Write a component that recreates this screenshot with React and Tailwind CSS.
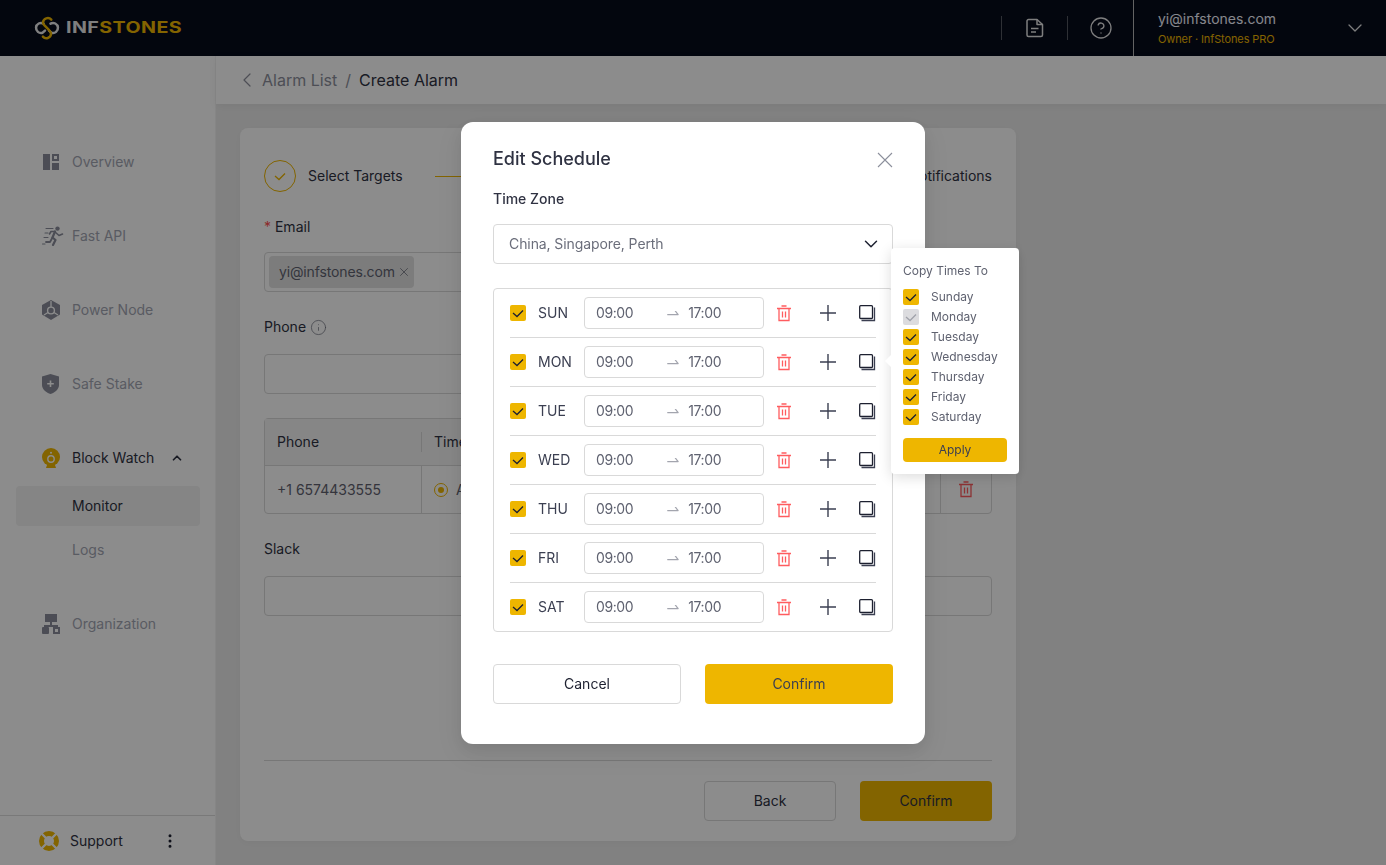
import React from "react";
import { ChevronDown, ChevronLeft, ChevronUp, CircleHelp, Info, X, EllipsisVertical } from "lucide-react";

const days = ["SUN", "MON", "TUE", "WED", "THU", "FRI", "SAT"];
const copyDays = ["Sunday", "Monday", "Tuesday", "Wednesday", "Thursday", "Friday", "Saturday"];

const Logo = () => (
	<svg width="26" height="26" viewBox="0 0 26 26" fill="none" strokeWidth="2.500" strokeLinecap="round">
		<path d="M9.500 8.600A5 5 0 1 0 8.600 17.700L11 15.600" stroke="#e8e8e8" />
		<path d="M16.500 8.600A5 5 0 1 1 17.400 17.700L15 15.600" stroke="#e8e8e8" />
		<path d="M17.300 4.600A4.800 4.800 0 0 0 9 7.400C9 11 17 14.600 17 19A4.600 4.600 0 0 1 8.900 21.600" stroke="#eeb600" />
	</svg>
);

const OverviewIcon = () => (
	<svg width="16" height="16" viewBox="0 0 16 16" fill="#8a8d9b" className="ml-px">
		<rect x="0" y="0" width="7" height="16" />
		<rect x="10" y="1" width="5" height="5" fill="none" stroke="#8a8d9b" strokeWidth="2" />
		<rect x="9" y="9" width="7" height="7" />
	</svg>
);

const RunnerIcon = () => (
	<svg width="22" height="20" viewBox="0 0 22 20" fill="none" stroke="#8a8d9b" strokeLinecap="round" strokeLinejoin="round">
		<circle cx="15.500" cy="2.600" r="2.200" fill="#8a8d9b" stroke="none" />
		<path d="M13 5.500L10.500 11.500L13.500 14L11 19" strokeWidth="2.200" />
		<path d="M13 6L17 9.500L20.500 8" strokeWidth="1.600" />
		<path d="M13 5.500L9 5.500L7.500 8" strokeWidth="1.600" />
		<path d="M10.500 11.500L8 16H4" strokeWidth="1.800" />
		<path d="M4 2.500H11M3 7H6M2 11.500H6M0.500 18H3" strokeWidth="1.100" />
	</svg>
);

const PowerIcon = () => (
	<svg width="18" height="20" viewBox="0 0 18 20" fill="#8a8d9b">
		<path d="M9 0L18 5V14.500L9 20L0 14.500V5Z" />
		<circle cx="9" cy="10.500" r="3.400" fill="none" stroke="#ffffff" strokeWidth="1.400" />
		<path d="M9 1V7M2 15L6 12.500M16 15L12 12.500" stroke="#ffffff" strokeWidth="1.300" />
	</svg>
);

const ShieldIcon = () => (
	<svg width="17" height="20" viewBox="0 0 17 20" fill="#8a8d9b">
		<path d="M8.500 0L17 2.600V11C17 15.500 12.500 18.600 8.500 20C4.500 18.600 0 15.500 0 11V2.600Z" />
		<path d="M8.500 6.500V13M5.200 9.800H11.800" stroke="#ffffff" strokeWidth="1.600" />
	</svg>
);

const WatchIcon = () => (
	<svg width="18" height="20" viewBox="0 0 18 20" fill="#eeb600">
		<circle cx="9" cy="9" r="9" />
		<path d="M5 17H13L14 20H4Z" />
		<circle cx="9" cy="11" r="3.200" fill="none" stroke="#ffffff" strokeWidth="1.400" />
		<circle cx="9" cy="4.800" r="1" fill="#ffffff" />
	</svg>
);

const OrgIcon = () => (
	<svg width="18" height="20" viewBox="0 0 18 20" fill="#8a8d9b">
		<rect x="3" y="0" width="12" height="8" />
		<rect x="8" y="8" width="2" height="3" />
		<rect x="2" y="11" width="14" height="2" />
		<rect x="0" y="13" width="7" height="7" rx="1" />
		<rect x="12" y="14" width="5" height="5" fill="none" stroke="#8a8d9b" strokeWidth="2" />
	</svg>
);

const SupportIcon = () => (
	<svg width="20" height="20" viewBox="0 0 20 20" fill="none" stroke="#eeb600">
		<circle cx="10" cy="10" r="7.500" strokeWidth="5" />
		<path d="M2 2L7 7M18 2L13 7M2 18L7 13M18 18L13 13" stroke="#ffffff" strokeWidth="2.400" />
	</svg>
);

const DocIcon = () => (
	<svg width="18" height="20" viewBox="0 0 18 20" fill="none" stroke="#e6e6e6" strokeWidth="1.500" strokeLinejoin="round">
		<path d="M2.500 1.500H11L16.500 6.500V17A1.500 1.500 0 0 1 15 18.500H2.500A1.500 1.500 0 0 1 1 17V3A1.500 1.500 0 0 1 2.500 1.500Z" />
		<path d="M11 1.500V6.500H16.500" />
		<path d="M5 10.500H12.500M5 14H10" />
	</svg>
);

const SwapRight = () => (
	<svg width="16" height="16" viewBox="0 0 1024 1024" fill="#a3a5ae">
		<path d="M873.100 596.200l-164-208A32 32 0 0 0 684 376h-64.800c-6.700 0-10.400 7.700-6.300 13l144.300 183H152c-4.400 0-8 3.600-8 8v60c0 4.400 3.600 8 8 8h695.900c26.800 0 41.700-30.800 25.200-51.800z" />
	</svg>
);

const TrashIcon = ({ color = "#ff5c5f" }) => (
	<svg width="16" height="17" viewBox="0 0 16 17" fill="none" stroke={color} strokeWidth="1.300">
		<path d="M1 3.500H15M5.500 1H10.500" />
		<path d="M3 3.500V15.500H13V3.500" />
		<path d="M6.500 6.500V12.500M9.500 6.500V12.500" />
	</svg>
);

const PlusIcon = () => (
	<svg width="16" height="16" viewBox="0 0 16 16" stroke="#3b3f51" strokeWidth="1.400">
		<path d="M8 0V16M0 8H16" />
	</svg>
);

const CopyIcon = () => (
	<svg width="18" height="18" viewBox="0 0 18 18" fill="none">
		<rect x="1.700" y="1.700" width="12.800" height="12.800" rx="1" stroke="#1d2030" strokeWidth="1.300" />
		<path d="M16.500 3.500V16.500H3.500" stroke="#3b3f51" strokeWidth="1.300" />
	</svg>
);

const CheckMark = ({ color }) => (
	<svg width="16" height="16" viewBox="0 0 16 16" fill="none" stroke={color} strokeWidth="1.300">
		<path d="M3 8L7 11.500L13 5.500" />
	</svg>
);

const Checkbox = ({ disabled }) => (
	<span
		className={
			disabled
				? "flex h-4 w-4 shrink-0 items-center justify-center rounded-[2px] bg-[#dcdcdf]"
				: "flex h-4 w-4 shrink-0 items-center justify-center rounded-[2px] bg-[#eeb600]"
		}
	>
		<CheckMark color={disabled ? "#a0a2aa" : "#1d2030"} />
	</span>
);

const NavItem = ({ icon, label, className, children }) => (
	<div className={"flex h-10 items-center pl-[42px] text-sm " + (className || "text-[#a3a6b3]")}>
		<span className="flex w-[30px] items-center">{icon}</span>
		<span>{label}</span>
		{children}
	</div>
);

const Field = ({ children }) => (
	<div className="flex h-10 items-center rounded border border-[#d9d9d9] px-1">{children}</div>
);

const App = () => {
	return (
		<div className="relative flex h-screen flex-col overflow-hidden bg-white font-[Inter,sans-serif] text-[#2f3242]">
			{/* Top bar */}
			<header className="flex h-14 shrink-0 items-center bg-[#060b1b]">
				<div className="flex items-center gap-[6px] pl-[34px]">
					<Logo />
					<span className="origin-left scale-x-[1.27] text-[15.500px] leading-none font-bold tracking-[0.02em] text-[#e8e8e8]">
						INF<span className="text-[#eeb600]">STONES</span>
					</span>
				</div>
				<div className="ml-auto flex h-full items-center">
					<span className="h-6 w-px bg-[#555862]" />
					<span className="flex w-[65px] justify-center">
						<DocIcon />
					</span>
					<span className="h-6 w-px bg-[#555862]" />
					<span className="flex w-[65px] justify-center">
						<CircleHelp size={24} strokeWidth={1.300} color="#e6e6e6" />
					</span>
					<div className="flex h-full w-[253px] items-center justify-between border-l border-[#b5b5b5] pr-[19px] pl-[24px]">
						<div>
							<div className="text-sm leading-5 text-[#f4f6ff]">yi@infstones.com</div>
							<div className="mt-[2px] text-[11px] leading-4 tracking-[-0.01em] text-[#eeb600]">Owner · InfStones PRO</div>
						</div>
						<ChevronDown size={24} strokeWidth={1.300} color="#e6e6e6" />
					</div>
				</div>
			</header>

			<div className="flex min-h-0 flex-1">
				{/* Sidebar */}
				<aside className="flex w-[216px] shrink-0 flex-col border-r border-[#f5f5f5] bg-white">
					<nav className="flex flex-1 flex-col pt-[86px]">
						<NavItem icon={<OverviewIcon />} label="Overview" />
						<div className="h-[34px]" />
						<NavItem icon={<RunnerIcon />} label="Fast API" />
						<div className="h-[34px]" />
						<NavItem icon={<PowerIcon />} label="Power Node" />
						<div className="h-[34px]" />
						<NavItem icon={<ShieldIcon />} label="Safe Stake" />
						<div className="h-[34px]" />
						<NavItem icon={<WatchIcon />} label="Block Watch" className="text-[#2f3242]">
							<ChevronUp size={14} strokeWidth={3} className="ml-4" />
						</NavItem>
						<div className="mt-2 mr-[15px] ml-4 flex h-10 items-center rounded bg-[#f2f2f2] pl-[56px] text-sm text-[#2f3242]">
							Monitor
						</div>
						<div className="mt-1 flex h-10 items-center pl-[72px] text-sm text-[#a3a6b3]">Logs</div>
						<div className="h-[34px]" />
						<NavItem icon={<OrgIcon />} label="Organization" />
					</nav>
					<div className="flex h-[50px] items-center border-t border-[#dddddd] pl-[39px]">
						<SupportIcon />
						<span className="ml-[11px] text-sm text-[#2f3242]">Support</span>
						<EllipsisVertical size={18} className="ml-[38px] text-[#1d2030]" />
					</div>
				</aside>

				{/* Main */}
				<main className="flex min-w-0 flex-1 flex-col bg-[#ececec]">
					<div className="flex h-12 shrink-0 items-center bg-white pl-6 text-base shadow-[0_2px_8px_rgba(0,0,0,0.06)]">
						<ChevronLeft size={24} strokeWidth={1.200} className="-ml-[5px] text-[#8c8f9c]" />
						<span className="ml-[3px] text-[#8c8f9c]">Alarm List</span>
						<span className="mx-2 text-[#8c8f9c]">/</span>
						<span>Create Alarm</span>
					</div>

					<div className="px-6 pt-6">
						<div className="flex h-[713px] w-[776px] flex-col rounded-lg bg-white px-6 pt-8 shadow-[0_2px_8px_rgba(0,0,0,0.04)]">
							<div className="flex h-8 items-center text-sm">
								<span className="flex h-8 w-8 items-center justify-center rounded-full border border-[#eeb600]">
									<CheckMark color="#eeb600" />
								</span>
								<span className="ml-3">Select Targets</span>
								<span className="mx-8 h-px flex-1 bg-[#eeb600]" />
								<span>Notifications</span>
							</div>

							<div className="mt-[25px] text-sm leading-5">
								<span className="text-[#ff4d4f]">*</span> Email
							</div>
							<div className="mt-[15px]">
								<Field>
									<span className="flex h-8 items-center gap-[2px] rounded bg-[#e2e2e2] pr-[3px] pl-[10px] text-sm tracking-[-0.01em] text-[#5f6270]">
										yi@infstones.com
										<X size={14} strokeWidth={1.200} />
									</span>
								</Field>
							</div>

							<div className="mt-[25px] flex items-center gap-1 text-sm leading-5">
								Phone <Info size={17} strokeWidth={1} className="text-[#6b6e7b]" />
							</div>
							<div className="mt-[17px] h-10 rounded border border-[#d9d9d9]" />

							<div className="mt-6 h-[96px] rounded border border-[#d9d9d9] text-sm">
								<div className="flex h-[47px] items-center border-b border-[#d9d9d9] bg-[#f5f5f5]">
									<span className="w-[156px] pl-3">Phone</span>
									<span className="h-5 w-px bg-[#d9d9d9]" />
									<span className="pl-3">Time</span>
								</div>
								<div className="flex h-[47px] items-center text-[#5f6270]">
									<span className="flex h-full w-[157px] items-center border-r border-[#d9d9d9] pl-3">+1 6574433555</span>
									<span className="ml-3 flex h-[14px] w-[14px] items-center justify-center rounded-full border border-[#eeb600]">
										<span className="h-[6px] w-[6px] rounded-full bg-[#eeb600]" />
									</span>
									<span className="ml-2">Anytime</span>
									<span className="ml-auto flex h-full w-[51px] items-center justify-center border-l border-[#d9d9d9]">
										<TrashIcon />
									</span>
								</div>
							</div>

							<div className="mt-[25px] text-sm leading-5">Slack</div>
							<div className="mt-[17px] h-10 rounded border border-[#d9d9d9]" />

							<div className="mt-[144px] flex justify-end gap-6 border-t border-[#d9d9d9] pt-5 text-sm">
								<button className="h-10 w-[132px] rounded border border-[#d9d9d9]">Back</button>
								<button className="h-10 w-[132px] rounded bg-[#eeb600]">Confirm</button>
							</div>
						</div>
					</div>
				</main>
			</div>

			{/* Modal mask */}
			<div className="fixed inset-0 flex justify-center bg-black/45 pt-[122px]">
				<div className="relative h-[622px] w-[464px] rounded-xl bg-white px-8 pt-[24px] shadow-[0_6px_16px_rgba(0,0,0,0.08),0_9px_28px_8px_rgba(0,0,0,0.05)]">
					<div className="flex h-[26px] items-center justify-between text-lg font-medium">
						<span>Edit Schedule</span>
						<svg width="16" height="16" viewBox="0 0 16 16" stroke="#8c8f9c" strokeWidth="1.100" className="mt-[2px]">
							<path d="M1 1L15 15M15 1L1 15" />
						</svg>
					</div>
					<div className="mt-[17px] text-sm leading-5 font-medium">Time Zone</div>
					<div className="mt-[15px] flex h-10 items-center justify-between rounded border border-[#d9d9d9] pr-[10px] pl-[15px] text-sm tracking-[-0.09px] text-[#6b6e7b]">
						China, Singapore, Perth
						<ChevronDown size={22} strokeWidth={1.600} color="#1d2030" />
					</div>

					<div className="mt-6 rounded border border-[#d9d9d9] px-4">
						{days.map((d) => (
							<div key={d} className="flex h-[49px] items-center border-b border-[#d9d9d9] last:h-12 last:border-b-0">
								<Checkbox />
								<span className="ml-3 w-[46px] text-sm text-[#3b3f51]">{d}</span>
								<div className="flex h-8 w-[180px] items-center rounded border border-[#d9d9d9] pl-[11px] text-sm tracking-[-0.4px] text-[#5f6270]">
									<span>09:00</span>
									<span className="ml-[32px]">
										<SwapRight />
									</span>
									<span className="ml-[7px]">17:00</span>
								</div>
								<span className="ml-3 flex w-4 justify-center">
									<TrashIcon />
								</span>
								<span className="ml-[28px]">
									<PlusIcon />
								</span>
								<span className="ml-[22px]">
									<CopyIcon />
								</span>
							</div>
						))}
					</div>

					<div className="mt-8 flex gap-6 text-sm">
						<button className="h-10 w-[188px] rounded border border-[#d9d9d9] text-[#1d2030]">Cancel</button>
						<button className="h-10 w-[188px] rounded bg-[#eeb600] text-[#3b3f51]">Confirm</button>
					</div>

					{/* Copy times popover */}
					<div className="absolute top-[126px] left-[430px] h-[226px] w-[128px] rounded bg-white px-3 pt-[15px] shadow-[0_3px_14px_rgba(0,0,0,0.14)]">
						<span className="absolute top-[108px] -left-[4px] h-[10px] w-[10px] rotate-45 bg-white" />
						<div className="text-xs leading-4 text-[#5f6270]">Copy Times To</div>
						<div className="mt-[8px] flex flex-col">
							{copyDays.map((d) => (
								<div key={d} className="flex h-5 items-center gap-3 text-xs text-[#5f6270]">
									<Checkbox disabled={d === "Monday"} />
									{d}
								</div>
							))}
						</div>
						<button className="mt-[11px] h-6 w-[104px] rounded-sm bg-[#eeb600] text-xs text-[#3b3f51]">Apply</button>
					</div>
				</div>
			</div>
		</div>
	);
};

export default App;
